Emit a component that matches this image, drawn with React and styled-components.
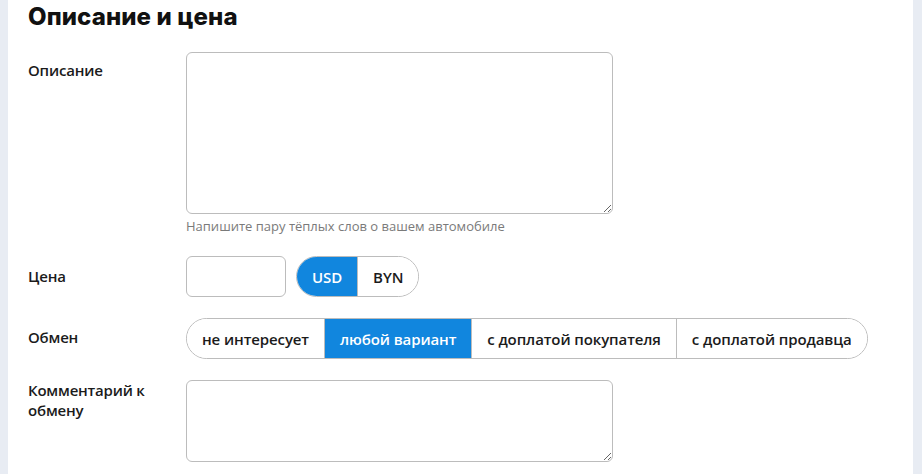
import React, { useState } from "react";
import styled, { createGlobalStyle } from "styled-components";

const GlobalStyle = createGlobalStyle`
  html, body {
    margin: 0;
    padding: 0;
    background: #e8ecf3;
  }
  * {
    box-sizing: border-box;
  }
`;

const Page = styled.div`
  display: flex;
  min-height: 100vh;
  padding: 0 9px 0 8px;
  background: #e8ecf3;
  font-family: "Open Sans", "Noto Sans", sans-serif;
  color: #1b1b1b;
`;

const Panel = styled.div`
  flex: 1;
  background: #fff;
  padding: 0 20px 20px;
  display: flex;
  flex-direction: column;
`;

const Title = styled.h2`
  margin: 0;
  padding-top: 2px;
  font-family: "Inter", "Liberation Sans", sans-serif;
  font-weight: 800;
  font-size: 24px;
  line-height: 30px;
  letter-spacing: 0.1px;
  color: #111;
`;

const Rows = styled.div`
  display: flex;
  flex-direction: column;
  gap: 21px;
  margin-top: 20px;
`;

const Row = styled.div`
  display: grid;
  grid-template-columns: 158px 1fr;
  align-items: start;
`;

const Label = styled.div`
  font-size: 15px;
  font-weight: 600;
  letter-spacing: -0.2px;
  line-height: 20px;
  padding-top: ${({ $offset }) => $offset || 0}px;
  padding-right: 20px;
`;

const Field = styled.div`
  display: flex;
  flex-direction: column;
  align-items: flex-start;
`;

const TextArea = styled.textarea`
  width: 427px;
  height: ${({ $h }) => $h}px;
  border: 1px solid #bcbcbc;
  border-radius: 6px;
  resize: vertical;
  font-family: inherit;
  font-size: 14px;
  padding: 8px 12px;
  outline: none;
`;

const Hint = styled.div`
  margin-top: 3px;
  font-size: 13px;
  line-height: 18px;
  color: #7a7a7a;
`;

const Inline = styled.div`
  display: flex;
  align-items: center;
  gap: 10px;
`;

const PriceInput = styled.input`
  width: 100px;
  height: 41px;
  border: 1px solid #bcbcbc;
  border-radius: 6px;
  font-family: inherit;
  font-size: 14px;
  padding: 0 10px;
  outline: none;
`;

const Segmented = styled.div`
  display: flex;
  height: 41px;
  border: 1px solid #bcbcbc;
  border-radius: 21px;
  overflow: hidden;
`;

const Segment = styled.button`
  border: none;
  border-left: 1px solid #bcbcbc;
  margin: 0;
  height: 100%;
  padding: 0 ${({ $pad }) => $pad}px;
  font-family: "Open Sans", "Noto Sans", sans-serif;
  font-size: 15px;
  font-weight: 600;
  letter-spacing: -0.1px;
  cursor: pointer;
  background: ${({ $active }) => ($active ? "#1186de" : "#fff")};
  color: ${({ $active }) => ($active ? "#fff" : "#1b1b1b")};
  &:first-child {
    border-left: none;
  }
`;

const currencies = ["USD", "BYN"];
const exchanges = [
  "не интересует",
  "любой вариант",
  "с доплатой покупателя",
  "с доплатой продавца",
];

export default function App() {
  const [currency, setCurrency] = useState("USD");
  const [exchange, setExchange] = useState("любой вариант");

  return (
    <Page>
      <GlobalStyle />
      <Panel>
        <Title>Описание и цена</Title>
        <Rows>
          <Row>
            <Label $offset={8}>Описание</Label>
            <Field>
              <TextArea $h={162} />
              <Hint>Напишите пару тёплых слов о вашем автомобиле</Hint>
            </Field>
          </Row>

          <Row>
            <Label $offset={10}>Цена</Label>
            <Inline>
              <PriceInput />
              <Segmented>
                {currencies.map((c) => (
                  <Segment
                    key={c}
                    $pad={15}
                    $active={currency === c}
                    onClick={() => setCurrency(c)}
                  >
                    {c}
                  </Segment>
                ))}
              </Segmented>
            </Inline>
          </Row>

          <Row>
            <Label $offset={9}>Обмен</Label>
            <Inline>
              <Segmented>
                {exchanges.map((e) => (
                  <Segment
                    key={e}
                    $pad={15}
                    $active={exchange === e}
                    onClick={() => setExchange(e)}
                  >
                    {e}
                  </Segment>
                ))}
              </Segmented>
            </Inline>
          </Row>

          <Row>
            <Label>Комментарий к обмену</Label>
            <Field>
              <TextArea $h={82} />
            </Field>
          </Row>
        </Rows>
      </Panel>
    </Page>
  );
}
